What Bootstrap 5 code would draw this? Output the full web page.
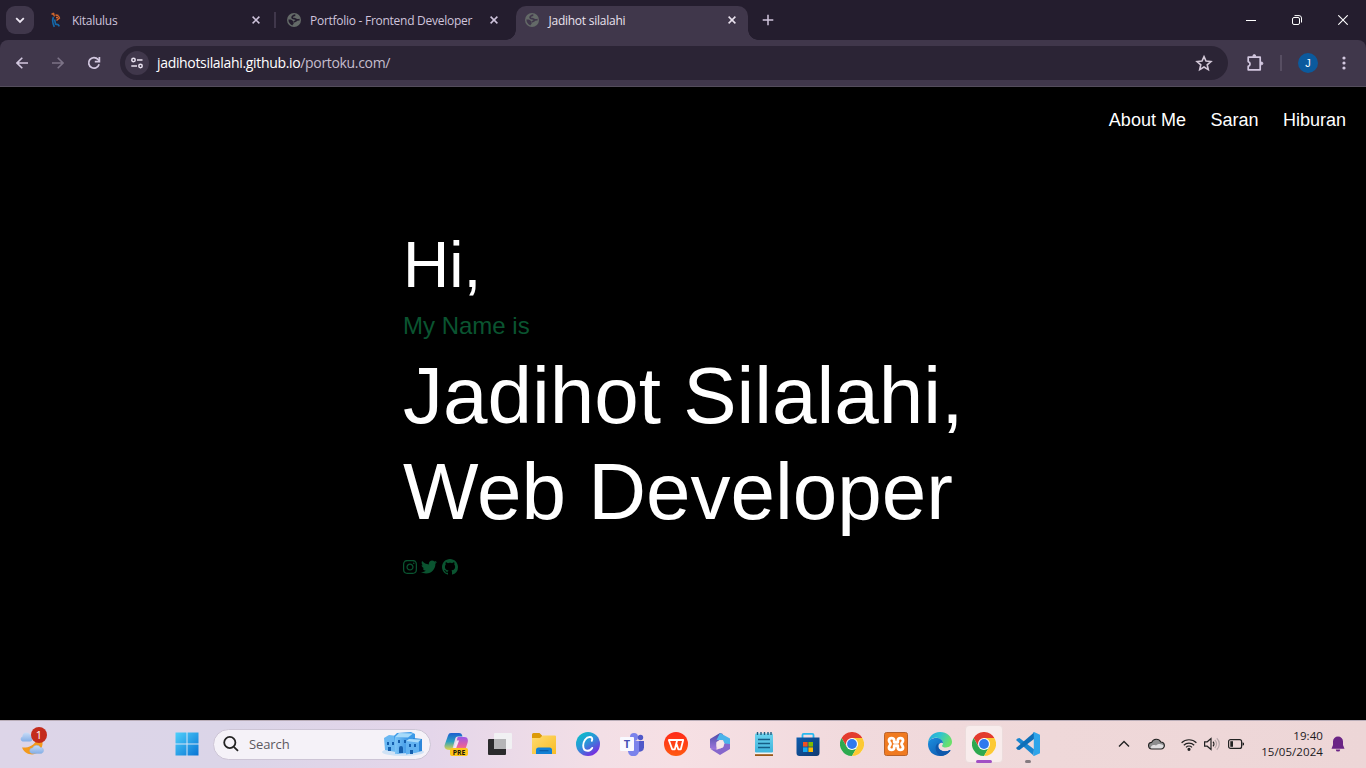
<!DOCTYPE html>
<html lang="en">
<head>
<meta charset="utf-8">
<meta name="viewport" content="width=device-width, initial-scale=1">
<title>Jadihot silalahi</title>
<link href="https://cdn.jsdelivr.net/npm/bootstrap@5.3.0/dist/css/bootstrap.min.css" rel="stylesheet">
<style>
  html, body { height: 100%; }
  body { background: #000; overflow: hidden; font-family: "Open Sans", "Noto Sans", sans-serif; }
  svg { display: block; flex: none; }

  /* browser window */
  .tabstrip { height: 40px; background: #241d2e; padding-left: 6px; color: #cfc4dc; font-size: 12px; }
  .tab-search { width: 28px; height: 28px; border-radius: 9px; background: #40374b; margin-top: 6px; }
  .tab-item { width: 238px; height: 34px; margin-top: 6px; padding: 0 12px 6px 15px; --land: #241d2e; }
  .tab-item .tab-label { margin-left: 9px; }
  .tab-label { letter-spacing: -.27px; line-height: 16px; white-space: nowrap; padding-top: 1px; }
  .tab-split { width: 2px; height: 16px; background: #40374b; margin-top: 12px; }
  .tab-current { --land: #40374b; width: 232px; height: 34px; padding: 0 10px 6px 9px; background: #40374b; border-radius: 10px 10px 0 0; color: #e9e2ee; position: relative; margin-top: 6px; }
  .tab-current::before, .tab-current::after { content: ""; position: absolute; bottom: 0; width: 10px; height: 10px; }
  .tab-current::before { left: -10px; background: radial-gradient(circle at 0 0, transparent 9.5px, #40374b 10px); }
  .tab-current::after { right: -10px; background: radial-gradient(circle at 100% 0, transparent 9.5px, #40374b 10px); }
  .win-btn { width: 46px; height: 40px; color: #fff; }
  .toolbar-shell { background: #241d2e; }
  .toolbar { height: 47px; background: #40374b; border-bottom: 1px solid #544d5c; border-radius: 8px 8px 0 0; color: #d3c8e0; }
  .tool-btn { width: 36px; height: 46px; }
  .omnibox { width: 1108px; height: 34px; border-radius: 17px; background: #2b2435; padding: 0 15px 0 5px; font-size: 14px; color: #c5bdcd; }
  .omnibox .host { color: #fff; }
  .site-chip { width: 24px; height: 24px; border-radius: 50%; background: #40374b; margin-right: 8px; color: #e9e2f0; }
  .url-text { letter-spacing: -.33px; line-height: 20px; }
  .tool-split { width: 2px; height: 16px; background: #574e62; }
  .avatar-j { width: 20px; height: 20px; border-radius: 50%; background: #0b5a9d; color: #fff; font-size: 11px; line-height: 20px; font-family: "Liberation Sans", sans-serif; }

  /* page */
  .page { font-family: "Liberation Sans", Arial, sans-serif; background: #000; }
  .site-nav { padding: 20px 20px 0; gap: 24.5px; font-size: 18px; line-height: 27px; }
  .site-nav a { color: #fff; text-decoration: none; }
  .hero { padding: 93px 0 0 2px; }
  .hero-copy { width: 562px; color: #fff; }
  .hero-copy h1, .hero-copy h2, .hero-copy h4 { font-weight: 400; line-height: 1.2; margin-bottom: 8px; white-space: nowrap; }
  .hero-copy h1 { font-size: 64px; }
  .hero-copy h4 { font-size: 24px; margin-bottom: 7.4px; }
  .hero-copy h2 { font-size: 80px; }
  .ink-green { color: #0a5430; }
  .socials { gap: 4.45px; margin-top: 19px; }

  /* taskbar */
  .taskbar { height: 48px; border-top: 1px solid #b9adb8; padding-bottom: 1px; font-size: 12px; color: #1c1a1e;
    background: linear-gradient(90deg, #ddd5e8 0, #dbd5e8 230px, #e4d6ea 430px, #f3dfe6 600px, #f6e0e4 680px, #f1dadd 850px, #efd8d9 1050px, #edd6d7 1366px); }
  .weather { width: 165px; padding-left: 18px; }
  .weather-badge { left: 31px; top: -3px; width: 16px; height: 16px; border-radius: 50%; background: #c42b1c; color: #fff; font-size: 11px; line-height: 16px; }
  .task-cell { width: 44px; height: 46px; }
  .task-search { width: 218px; height: 31px; border-radius: 16px; background: #f5f2f8; border: 1px solid #cdc5d6; margin: 0 3px 0 4px; padding: 0 5px 0 9px; font-size: 13px; color: #5c5960; }
  .search-label { margin-left: 10px; letter-spacing: -.1px; line-height: 17px; padding-top: 1px; }
  .task-open { width: 38px; height: 38px; border-radius: 4px; background: #f8ecec; border: 1px solid #ecdcdc; }
  .run-mark { left: 50%; transform: translateX(-50%); height: 3px; border-radius: 2px; }
  .tray { padding-right: 20px; }
  .clock { line-height: 16px; font-size: 11.5px; letter-spacing: .08px; width: 63px; }
</style>
</head>
<body class="d-flex flex-column">

<svg width="0" height="0" class="position-absolute" aria-hidden="true">
  <defs>
    <symbol id="globe" viewBox="0 0 14 14"><circle cx="7" cy="7" r="7" fill="#646a68"/><path d="M8.300 2.200C6.800 2.300 5 3.200 5.100 4.600 5.300 6.200 9 5.200 9.400 7c.2 1.500-2.200 1-2.400 2.300M9.400 6.500c1.200.6 2.200.3 3.200 0" stroke="var(--land)" stroke-width="1.700" fill="none"/><path d="M1.400 6.600c2-.2 4.600.4 4.800 2 0 1 .9 1.300.4 2.100-.5.700-1 .8-1.200 1.700C3 11.600 1.300 9.300 1.400 6.600z" fill="var(--land)"/></symbol>
    <symbol id="close" viewBox="0 0 8 8"><path d="M.6.6l6.800 6.800M7.400.6L.6 7.400" stroke="currentColor" stroke-width="1.500" fill="none"/></symbol>
    <symbol id="chrome" viewBox="0 0 24 24">
      <circle cx="12" cy="12" r="12" fill="#fff"/>
      <path d="M12 6h10.400A12 12 0 0 0 1.600 6l5.200 9z" fill="#e33b2e"/>
      <path d="M6.800 15L1.600 6A12 12 0 0 0 12 24l5.200-9z" fill="#2da94f"/>
      <path d="M17.200 15L12 24A12 12 0 0 0 22.400 6H12z" fill="#fcc934"/>
      <circle cx="12" cy="12" r="6" fill="#fff"/><circle cx="12" cy="12" r="4.900" fill="#3079ee"/>
    </symbol>
    <linearGradient id="winG" x1="0" y1="0" x2="1" y2="1"><stop offset="0" stop-color="#4fd0fb"/><stop offset="1" stop-color="#0874d4"/></linearGradient>
    <linearGradient id="copA" x1="0" y1="0" x2="0" y2="1"><stop offset="0" stop-color="#1c5fd0"/><stop offset=".5" stop-color="#2b9fc0"/><stop offset="1" stop-color="#e6d54a"/></linearGradient>
    <linearGradient id="copB" x1="0" y1="0" x2="0" y2="1"><stop offset="0" stop-color="#9b57e8"/><stop offset=".6" stop-color="#e8609c"/><stop offset="1" stop-color="#f39a6a"/></linearGradient>
    <linearGradient id="folG" x1="0" y1="0" x2="1" y2="1"><stop offset="0" stop-color="#ffdb70"/><stop offset="1" stop-color="#f8bc25"/></linearGradient>
    <linearGradient id="canG" x1="0" y1="0" x2=".7" y2="1"><stop offset="0" stop-color="#04c6c6"/><stop offset=".5" stop-color="#2a96d8"/><stop offset="1" stop-color="#7c27e0"/></linearGradient>
    <linearGradient id="wpsG" x1="0" y1="0" x2="0" y2="1"><stop offset="0" stop-color="#ff2a1a"/><stop offset="1" stop-color="#ff5a12"/></linearGradient>
    <linearGradient id="offG" x1="0" y1="0" x2="0" y2="1"><stop offset="0" stop-color="#4a4aa6"/><stop offset="1" stop-color="#a67be0"/></linearGradient>
    <linearGradient id="notG" x1="0" y1="0" x2="0" y2="1"><stop offset="0" stop-color="#6dd3ee"/><stop offset="1" stop-color="#3fb4dc"/></linearGradient>
    <linearGradient id="stoG" x1="0" y1="0" x2="1" y2="1"><stop offset="0" stop-color="#0c5cae"/><stop offset="1" stop-color="#123a70"/></linearGradient>
    <linearGradient id="edgA" x1="0" y1="0" x2="1" y2=".4"><stop offset="0" stop-color="#25a2e0"/><stop offset=".5" stop-color="#2fc4d0"/><stop offset="1" stop-color="#6ae06a"/></linearGradient>
    <linearGradient id="edgB" x1="0" y1="0" x2="1" y2="1"><stop offset="0" stop-color="#1b8fe0"/><stop offset="1" stop-color="#0d4fa4"/></linearGradient>
    <linearGradient id="cloG" x1="0" y1="0" x2="0" y2="1"><stop offset="0" stop-color="#c9dcf7"/><stop offset="1" stop-color="#83aee6"/></linearGradient>
    <linearGradient id="bldG" x1="0" y1="0" x2="1" y2="0"><stop offset="0" stop-color="#7cc4f6"/><stop offset="1" stop-color="#3c96e6"/></linearGradient>
  </defs>
</svg>

<header class="flex-shrink-0">
  <div class="tabstrip d-flex">
    <div class="tab-search d-flex align-items-center justify-content-center">
      <svg width="10" height="7" viewBox="0 0 10 7" fill="none" stroke="#eee8f4" stroke-width="1.800"><path d="M1.200 1.200L5 5l3.800-3.800"/></svg>
    </div>
    <div class="tab-item d-flex align-items-center">
      <svg width="14" height="16" viewBox="0 0 14 16" fill="none"><path d="M4.500 5C3 8 3.500 11 5.300 14.800M5.500 7.500c1 2.500.5 5 1.500 5s2-.8 3.300 1.800" stroke="#1668a8" stroke-width="1.700"/><path d="M5.500 4.500L4 .8M2.500 2h3M6.500 3l3 .5M9.500 4l1 2-3 2.500M7 5.500h2" stroke="#d8692c" stroke-width="1.300"/></svg>
      <span class="tab-label flex-grow-1">Kitalulus</span>
      <svg width="8" height="8"><use href="#close"/></svg>
    </div>
    <div class="tab-split" style="margin-left:2px"></div>
    <div class="tab-item d-flex align-items-center" style="padding-left:11px;padding-right:18px;width:240px">
      <svg width="14" height="14"><use href="#globe"/></svg>
      <span class="tab-label flex-grow-1">Portfolio - Frontend Developer</span>
      <svg width="8" height="8"><use href="#close"/></svg>
    </div>
    <div class="tab-current d-flex align-items-center">
      <svg width="14" height="14"><use href="#globe"/></svg>
      <span class="tab-label flex-grow-1" style="margin-left:9.5px;letter-spacing:-.25px">Jadihot silalahi</span>
      <svg width="8" height="8" style="margin-right:2px"><use href="#close"/></svg>
    </div>
    <div class="d-flex align-items-center justify-content-center" style="width:40px">
      <svg width="12" height="12" viewBox="0 0 12 12" stroke="currentColor" stroke-width="1.500"><path d="M6 .7v10.600M.7 6h10.600"/></svg>
    </div>
    <div class="d-flex ms-auto">
      <div class="win-btn d-flex align-items-center justify-content-center"><svg width="10" height="10" viewBox="0 0 10 10" stroke="currentColor"><path d="M0 5.500h10"/></svg></div>
      <div class="win-btn d-flex align-items-center justify-content-center"><svg width="10" height="10" viewBox="0 0 10 10" fill="none" stroke="currentColor"><rect x=".5" y="2.500" width="7" height="7" rx="1.500"/><path d="M2.500.6H7A2.500 2.500 0 0 1 9.500 3v4.500"/></svg></div>
      <div class="win-btn d-flex align-items-center justify-content-center"><svg width="10" height="10" viewBox="0 0 10 10" stroke="currentColor" stroke-width="1.100"><path d="M.3.300l9.400 9.400M9.700.300L.3 9.700"/></svg></div>
    </div>
  </div>
  <div class="toolbar-shell">
    <div class="toolbar d-flex align-items-center">
      <div class="tool-btn d-flex align-items-center justify-content-center" style="margin-left:4px"><svg width="12" height="12" viewBox="0 0 12 12" fill="none" stroke="currentColor" stroke-width="1.600"><path d="M12 6H1.200M6.300.7L1 6l5.300 5.300"/></svg></div>
      <div class="tool-btn d-flex align-items-center justify-content-center" style="color:#7c7387"><svg width="12" height="12" viewBox="0 0 12 12" fill="none" stroke="currentColor" stroke-width="1.600"><path d="M0 6h10.800M5.700.7L11 6l-5.300 5.300"/></svg></div>
      <div class="tool-btn d-flex align-items-center justify-content-center"><svg width="14" height="14" viewBox="0 0 14 14" fill="none" stroke="currentColor" stroke-width="1.700"><path d="M12.100 8.300A5.300 5.300 0 1 1 11 3.400L12.400 5"/><path d="M12.400 1v4.700H7.800"/></svg></div>
      <div class="omnibox d-flex align-items-center ms-2">
        <div class="site-chip d-flex align-items-center justify-content-center"><svg width="14" height="12" viewBox="0 0 14 12" fill="none" stroke="currentColor" stroke-width="1.500"><circle cx="3.500" cy="3" r="1.700"/><path d="M7 3h5.500M1.300 9H7"/><circle cx="10.500" cy="9" r="1.700"/></svg></div>
        <span class="url-text flex-grow-1"><span class="host">jadihotsilalahi.github.io</span>/portoku.com/</span>
        <svg width="18" height="18" viewBox="0 0 18 18" fill="none" stroke="#d3c8d8" stroke-width="1.600"><path d="M9 2.600l2 4.500 4.900.45-3.700 3.250 1.100 4.800L9 13.050 4.700 15.600l1.100-4.800L2.100 7.550 7 7.100z"/></svg>
      </div>
      <div class="d-flex align-items-center justify-content-center" style="width:53px"><svg width="18" height="18" viewBox="0 0 18 18" fill="none" stroke="currentColor" stroke-width="1.700" stroke-linejoin="round"><path d="M2.200 3.200h12v12.600h-12v-3.400c2.500-.8 2.500-4 0-4.800z"/><path d="M6.900 2.700V2a1.400 1.400 0 0 1 2.800 0v.7M15 8h.5a1.400 1.400 0 0 1 0 2.800H15" fill="currentColor" stroke-width=".8"/></svg></div>
      <div class="tool-split" style="margin-left:-1px"></div>
      <div class="avatar-j text-center" style="margin-left:16px">J</div>
      <svg width="4" height="16" viewBox="0 0 4 16" fill="currentColor" style="margin-left:24px"><circle cx="2" cy="3" r="1.600"/><circle cx="2" cy="8" r="1.600"/><circle cx="2" cy="13" r="1.600"/></svg>
    </div>
  </div>
</header>

<main class="page flex-grow-1">
  <nav class="site-nav d-flex justify-content-end">
    <a href="#about">About Me</a><a href="#saran">Saran</a><a href="#hiburan">Hiburan</a>
  </nav>
  <section class="hero d-flex justify-content-center">
    <div class="hero-copy">
      <h1>Hi,</h1>
      <h4 class="ink-green">My Name is</h4>
      <h2>Jadihot Silalahi,<br>Web Developer</h2>
      <div class="socials d-flex ink-green">
        <svg width="14" height="16" viewBox="0 0 448 512" fill="currentColor"><path d="M224.100 141c-63.600 0-114.900 51.300-114.900 114.900s51.300 114.900 114.900 114.900S339 319.500 339 255.900 287.700 141 224.100 141zm0 189.600c-41.100 0-74.700-33.500-74.700-74.700s33.500-74.700 74.700-74.700 74.700 33.500 74.700 74.700-33.600 74.700-74.700 74.700zm146.400-194.300c0 14.900-12 26.800-26.800 26.800-14.900 0-26.800-12-26.800-26.800s12-26.800 26.800-26.800 26.800 12 26.800 26.800zm76.100 27.200c-1.700-35.900-9.900-67.700-36.200-93.900-26.200-26.200-58-34.400-93.900-36.200-37-2.100-147.900-2.100-184.900 0-35.800 1.700-67.600 9.900-93.900 36.100s-34.400 58-36.200 93.900c-2.100 37-2.100 147.900 0 184.900 1.700 35.900 9.900 67.700 36.200 93.900s58 34.400 93.900 36.200c37 2.100 147.900 2.100 184.900 0 35.900-1.700 67.700-9.900 93.900-36.200 26.200-26.200 34.400-58 36.200-93.900 2.100-37 2.100-147.800 0-184.800zM398.800 388c-7.800 19.600-22.900 34.700-42.600 42.600-29.500 11.700-99.500 9-132.100 9s-102.700 2.600-132.100-9c-19.600-7.800-34.700-22.900-42.600-42.600-11.700-29.500-9-99.500-9-132.100s-2.600-102.700 9-132.100c7.800-19.600 22.900-34.700 42.600-42.600 29.500-11.700 99.500-9 132.100-9s102.700-2.600 132.100 9c19.600 7.800 34.700 22.900 42.600 42.600 11.700 29.500 9 99.500 9 132.100s2.700 102.700-9 132.100z"/></svg>
        <svg width="16" height="16" viewBox="0 0 512 512" fill="currentColor"><path d="M459.370 151.716c.325 4.548.325 9.097.325 13.645 0 138.720-105.583 298.558-298.558 298.558-59.452 0-114.680-17.219-161.137-47.106 8.447.974 16.568 1.299 25.340 1.299 49.055 0 94.213-16.568 130.274-44.832-46.132-.975-84.792-31.188-98.112-72.772 6.498.974 12.995 1.624 19.818 1.624 9.421 0 18.843-1.300 27.614-3.573-48.081-9.747-84.143-51.980-84.143-102.985v-1.299c13.969 7.797 30.214 12.670 47.431 13.319-28.264-18.843-46.781-51.005-46.781-87.391 0-19.492 5.197-37.360 14.294-52.954 51.655 63.675 129.300 105.258 216.365 109.807-1.624-7.797-2.599-15.918-2.599-24.040 0-57.828 46.782-104.934 104.934-104.934 30.213 0 57.502 12.670 76.670 33.137 23.715-4.548 46.456-13.320 66.599-25.340-7.798 24.366-24.366 44.833-46.132 57.827 21.117-2.273 41.584-8.122 60.426-16.243-14.292 20.791-32.161 39.308-52.628 54.253z"/></svg>
        <svg width="16" height="16" viewBox="0 0 16 16" fill="currentColor"><path d="M8 0C3.580 0 0 3.580 0 8c0 3.540 2.290 6.530 5.470 7.590.4.070.55-.17.55-.38 0-.19-.01-.82-.01-1.490-2.010.37-2.530-.49-2.690-.94-.09-.23-.48-.94-.82-1.130-.28-.15-.68-.52-.01-.53.63-.01 1.080.58 1.230.82.72 1.210 1.870.87 2.330.66.070-.52.28-.87.51-1.070-1.780-.2-3.640-.89-3.640-3.950 0-.87.31-1.590.82-2.150-.08-.2-.36-1.020.08-2.120 0 0 .67-.21 2.200.82.64-.18 1.320-.27 2-.27s1.360.09 2 .27c1.530-1.040 2.200-.82 2.200-.82.44 1.100.16 1.920.08 2.120.51.56.82 1.270.82 2.150 0 3.070-1.870 3.750-3.650 3.950.29.25.54.73.54 1.480 0 1.070-.01 1.930-.01 2.200 0 .21.15.46.55.38A8.010 8.010 0 0 0 16 8c0-4.420-3.580-8-8-8z"/></svg>
      </div>
    </div>
  </section>
</main>

<footer class="taskbar d-flex align-items-center flex-shrink-0">
  <div class="weather position-relative">
    <svg width="28" height="28" viewBox="0 0 28 28"><path d="M4 17.500c5 .5 13-1 15.500-10 3 0 5.500 3 5 7-1 7-7 10.500-12 9.800C8 23.700 5.500 21 4 17.500z" fill="#f39a1c"/><path d="M4.500 11.500a2.600 2.600 0 0 1 0-5 4 4 0 0 1 7.500-2c3 0 4 7 0 7z" fill="url(#cloG)"/><path d="M14.500 23.500a2.600 2.600 0 0 1 0-5.500 4.500 4.500 0 0 1 8-.5c3.500-.5 4.500 6 0 6z" fill="url(#cloG)" stroke="#8fb3e2" stroke-width=".5"/></svg>
    <span class="weather-badge position-absolute text-center">1</span>
  </div>
  <div class="task-cell d-flex align-items-center justify-content-center"><svg width="24" height="24" viewBox="0 0 24 24"><path d="M.5.500H23.500V23.500H.5z" fill="url(#winG)"/><path d="M12 0v24M0 12h24" stroke="#d8e4f4" stroke-width="1"/></svg></div>
  <div class="task-search d-flex align-items-center">
    <svg width="16" height="16" viewBox="0 0 16 16" fill="none" stroke="#222" stroke-width="1.800"><circle cx="6.800" cy="6.500" r="5.600"/><path d="M10.800 10.800l4.200 4"/></svg>
    <span class="search-label flex-grow-1">Search</span>
    <svg width="44" height="26" viewBox="0 0 44 26">
      <ellipse cx="22" cy="21" rx="21" ry="4" fill="#cfe2f5"/>
      <path d="M3 7l5-3 9 1v14l-2 2L4 19z" fill="#6ab8f2"/><path d="M13 5l3-3 14-1 4 2v16l-18 4z" fill="#3d9ae8"/>
      <path d="M14 6h13v16l-13 1z" fill="url(#bldG)"/><path d="M14 6l4-4 14 .5-5 4z" fill="#a6dafa"/>
      <path d="M32 7l9 1v12l-9 2z" fill="#2d87da"/><path d="M25 10h10l3 1v10l-13 2.500z" fill="#62b2f0"/><path d="M25 10l3-2 12 .5-3 3z" fill="#a6dafa"/>
      <path d="M6 11h2v3H6zM11 11h2v3h-2zM17 9h2v3h-2zM23 9h2v3h-2zM28 13h2v3h-2zM33 13h2v3h-2zM18 17a2 2 0 0 1 4 0v5h-4zM29 19h3v4h-3zM7 16h3v4H7z" fill="#155fae"/>
    </svg>
  </div>
  <div class="task-cell d-flex align-items-center justify-content-center"><svg width="24" height="24" viewBox="0 0 24 24"><path d="M7 1h8c2 0 3 1 3.500 3.500H14c-2 0-2.500 1-3 3L9 15c-.5 2-1 3-3 3C1 18-.5 15.500 1 12L4 3.500C4.600 1.800 5.500 1 7 1z" fill="url(#copA)"/><path d="M14 5h6c3.500 0 4.500 2 3.500 6l-2 6c-.7 2-1.500 3-3.500 3H8c2 0 2.500-1 3-3l2-9c.4-1.500 0-2.500 1-3z" fill="url(#copB)"/><path d="M12.500 8.500h2.600L12 16.500H9.800z" fill="#f3e6f5"/><rect x="6" y="16" width="18" height="8" rx="2" fill="#ffc51b"/><text x="15" y="22.600" text-anchor="middle" font-family="Open Sans, sans-serif" font-weight="700" font-size="6.800" fill="#1d1708">PRE</text></svg></div>
  <div class="task-cell d-flex align-items-center justify-content-center"><svg width="24" height="24" viewBox="0 0 24 24"><rect x="0" y="7" width="18" height="16" rx="1" fill="#2b2b2d"/><rect x="6" y="1" width="18" height="16" rx="1" fill="#f1f1f3"/><path d="M6 7h12v10H6z" fill="#b5b5b7"/></svg></div>
  <div class="task-cell d-flex align-items-center justify-content-center"><svg width="24" height="24" viewBox="0 0 24 24"><path d="M0 2.500A1.500 1.500 0 0 1 1.500 1h6L10 3.500V8H0z" fill="#dc9a08"/><path d="M0 6h8l2.500-2.500H23a1 1 0 0 1 1 1V22H0z" fill="url(#folG)"/><path d="M4 22v-4a2.500 2.500 0 0 1 2.500-2.500h11A2.500 2.500 0 0 1 20 18v4z" fill="#1280d4"/><path d="M7.500 18.700h9" stroke="#0a5ca8" stroke-width="1.200"/></svg></div>
  <div class="task-cell d-flex align-items-center justify-content-center"><svg width="24" height="24" viewBox="0 0 24 24"><circle cx="12" cy="12" r="12" fill="url(#canG)"/><path d="M15.800 8.800C17 6.500 15.800 5 13.800 5 10 5 7.200 9.500 7.200 13.500c0 3.300 1.700 5.300 4.200 5.300 2 0 3.700-1.200 4.800-2.900" fill="none" stroke="#fff" stroke-width="1.900" stroke-linecap="round"/></svg></div>
  <div class="task-cell d-flex align-items-center justify-content-center"><svg width="24" height="24" viewBox="0 0 24 24"><circle cx="14" cy="5" r="4" fill="#7b83eb"/><circle cx="20.500" cy="5.500" r="2.700" fill="#5059c9"/><path d="M16 9h8v6.500a4.500 4.500 0 0 1-6 4z" fill="#5059c9"/><path d="M8 9h11v9a5.500 5.500 0 0 1-11 1.500z" fill="#7b83eb"/><rect x="0" y="5" width="14" height="14" rx="1" fill="#f9f9ff"/><text x="7" y="16" text-anchor="middle" font-family="Open Sans, sans-serif" font-size="11" font-weight="700" fill="#4650b4">T</text></svg></div>
  <div class="task-cell d-flex align-items-center justify-content-center"><svg width="24" height="24" viewBox="0 0 24 24"><circle cx="12" cy="12" r="12" fill="url(#wpsG)"/><path d="M4.800 8h8.400L10.800 17.300H8.200zM13.500 8h5.700l-2.400 9.300h-2.500L12.600 12" fill="none" stroke="#fff" stroke-width="1.800" stroke-linejoin="round"/></svg></div>
  <div class="task-cell d-flex align-items-center justify-content-center"><svg width="24" height="24" viewBox="0 0 24 24"><path d="M12 1l3 1-3.500 6-3 2.500V18L6 18.500 2 16V7z" fill="url(#offG)"/><path d="M12 1l10 5.500v8L16.500 11.500 15 8H8.500z" fill="#4cb4ea"/><path d="M22 12v5l-10 6-9.500-6 6 .8 6.500-2.300 1.500-4z" fill="#8667cc"/><path d="M12 8l3.500 2v4.500L12 16.500l-3.500-2V10z" fill="#f8e6ea"/></svg></div>
  <div class="task-cell d-flex align-items-center justify-content-center"><svg width="24" height="24" viewBox="0 0 24 24"><path d="M3 22h18v2H3z" fill="#9a5718"/><path d="M3 20h18v2.200H3z" fill="#f6f2ee"/><rect x="3" y="1.500" width="18" height="19" rx="1" fill="url(#notG)"/><path d="M5.500 0v3M9 0v3M12.500 0v3M16 0v3M19 0v3" stroke="#205d80" stroke-width="1.400"/><path d="M6 7.500h12M6 11.500h12M6 15.500h12" stroke="#155e86" stroke-width="1.500"/></svg></div>
  <div class="task-cell d-flex align-items-center justify-content-center"><svg width="24" height="24" viewBox="0 0 24 24"><path d="M6.500 7V3A1.200 1.200 0 0 1 7.700 1.800h8.600A1.200 1.200 0 0 1 17.500 3v4" fill="none" stroke="#27b9ef" stroke-width="1.800"/><path d="M.5 5.500h23V21a3 3 0 0 1-3 3h-17a3 3 0 0 1-3-3z" fill="url(#stoG)"/><path d="M7 10h4.600v4.600H7z" fill="#f05022"/><path d="M12.400 10H17v4.600h-4.600z" fill="#7fba00"/><path d="M7 15.400h4.600V20H7z" fill="#14a8ee"/><path d="M12.400 15.400H17V20h-4.600z" fill="#ffb900"/></svg></div>
  <div class="task-cell d-flex align-items-center justify-content-center"><svg width="24" height="24"><use href="#chrome"/></svg></div>
  <div class="task-cell d-flex align-items-center justify-content-center"><svg width="24" height="24" viewBox="0 0 24 24"><rect x=".5" y=".5" width="23" height="23" rx="2" fill="#f07a20" stroke="#b9622a"/><path d="M10.200 10.300V8.300C10.200 5.300 5 5.300 5 8.500c0 2 1.500 2.300 1.500 3.500S5 13.500 5 15.500c0 3.200 5.200 3.200 5.200.2v-2h3.600v2c0 3 5.200 3 5.200-.2 0-2-1.500-2.300-1.500-3.500S19 10.500 19 8.500c0-3.200-5.200-3.200-5.200-.2v2z" fill="none" stroke="#fff" stroke-width="2.800" stroke-linejoin="round"/></svg></div>
  <div class="task-cell d-flex align-items-center justify-content-center"><svg width="24" height="24" viewBox="0 0 24 24"><path d="M0 12C0 5 5 0 12 0s12 4.800 12 9.800c0 4-3 5.700-6 5.700-2.500 0-4-.8-4-1.600 0-.6 1-1 1-2.700C15 8 11 5.500 7 5.800 3.500 6 1 8.500 0 12z" fill="url(#edgA)"/><path d="M0 12C.5 8 4 6 8 6c4 0 7 2 7 5.200-1.500-1.400-4.500 0-4.500 3 0 3.500 4 5.500 7.500 5.100 2-.3 3-.8 4-1.300.5.200.5.500.3.900C20 22 16 24 12 24 5 24 0 19 0 12z" fill="url(#edgB)"/><path d="M10.800 11C6 12.500 6.500 21 13 24c3.500-.1 7-2 9-5 .6-.9.200-1.200-.5-.8-1 .5-2 .9-4 1-4 .2-7.500-2-7.500-5 0-1.400.2-2.300.8-3.200z" fill="#0e58ac"/></svg></div>
  <div class="task-cell d-flex align-items-center justify-content-center"><div class="task-open position-relative d-flex align-items-center justify-content-center"><svg width="24" height="24"><use href="#chrome"/></svg><span class="run-mark position-absolute" style="width:16px;bottom:-1px;background:#a14fc4"></span></div></div>
  <div class="task-cell position-relative d-flex align-items-center justify-content-center"><svg width="24" height="24" viewBox="0 0 24 24"><path d="M1.500 6.500L0 8l17.500 15.500L18 17.200 3.500 6z" fill="#1a86d0"/><path d="M0 16l1.500 1.700 2 .2L18 7V.5z" fill="#0f6fb8"/><path d="M18 0l6 2.800v18.400L18 24l-1-.4.800-1.200V1.600L17 .4z" fill="#2ea5ea"/></svg><span class="run-mark position-absolute" style="width:6px;bottom:4px;background:#857b80"></span></div>

  <div class="tray d-flex align-items-center ms-auto">
    <svg width="12" height="12" viewBox="0 0 12 12" fill="none" stroke="#222" stroke-width="1.400" style="margin-right:18px"><path d="M1 8.500L6 3.500l5 5"/></svg>
    <svg width="17" height="12" viewBox="0 0 17 12" style="margin-right:16px"><path d="M4 11a3.300 3.300 0 0 1-.3-6.600A5 5 0 0 1 12.800 4 3.500 3.500 0 0 1 13 11z" fill="#8d8d8f"/><path d="M3 11c-1-3 2-5 5-3.500 3-2.500 6-1.500 8 .5-.2 2-1.400 3-3 3z" fill="#dfdde0"/><path d="M4 11a3.300 3.300 0 0 1-.3-6.600A5 5 0 0 1 12.800 4 3.500 3.500 0 0 1 13 11z" fill="none" stroke="#222" stroke-width="1.100"/></svg>
    <svg width="16" height="13" viewBox="0 0 16 13" fill="none" stroke="#222" stroke-width="1.200" style="margin-right:7px"><path d="M.6 4.800a10.500 10.500 0 0 1 14.800 0M2.800 7.200a7.400 7.400 0 0 1 10.400 0M5 9.400a4.300 4.300 0 0 1 6 0"/><circle cx="8" cy="11.300" r="1" fill="#222"/></svg>
    <svg width="16" height="14" viewBox="0 0 16 14" fill="none" stroke="#222" stroke-width="1.200" style="margin-right:8px"><path d="M.6 4.800h2.600L7 1.500v11L3.200 9.200H.6zM9 4.800a3 3 0 0 1 0 4.400"/><path d="M10.800 3a5.500 5.500 0 0 1 0 8M12.800 1.200a8 8 0 0 1 0 11.600" stroke="#b7a8aa"/></svg>
    <svg width="16" height="10" viewBox="0 0 16 10" style="margin-right:16px"><rect x=".6" y=".6" width="13" height="8.800" rx="2" fill="none" stroke="#222" stroke-width="1.200"/><rect x="2.300" y="2.200" width="2.700" height="5.600" fill="#222"/><path d="M14.500 3.200l1.500.8v2l-1.500.8z" fill="#222"/></svg>
    <div class="clock text-end text-nowrap">19:40<br>15/05/2024</div>
    <svg width="14" height="16" viewBox="0 0 14 16" style="margin-left:8px;margin-right:1px" fill="#6a2485"><path d="M7 .5a5 5 0 0 0-5 5V9L.5 12.800h13L12 9V5.500a5 5 0 0 0-5-5zM4.800 13.400a2.200 2.200 0 0 0 4.400 0z"/></svg>
  </div>
</footer>
<script src="https://cdn.jsdelivr.net/npm/bootstrap@5.3.0/dist/js/bootstrap.bundle.min.js"></script>
</body>
</html>
